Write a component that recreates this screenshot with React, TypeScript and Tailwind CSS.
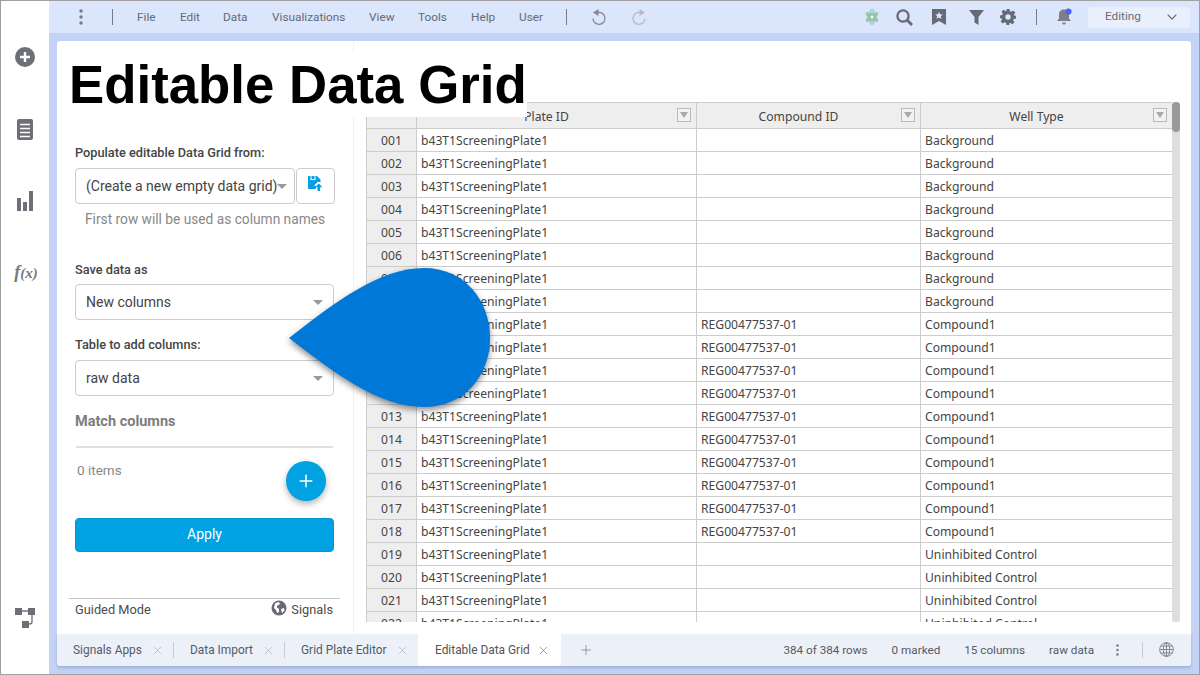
import { ChevronDown, Plus, X } from "lucide-react";
import type { ReactNode } from "react";

const MENU = [
  { label: "File", w: "w-[43px]" },
  { label: "Edit", w: "w-[43px]" },
  { label: "Data", w: "w-[49px]" },
  { label: "Visualizations", w: "w-[97px]" },
  { label: "View", w: "w-[49px]" },
  { label: "Tools", w: "w-[53px]" },
  { label: "Help", w: "w-[48px]" },
  { label: "User", w: "w-[47px]" },
];

const ROWS = Array.from({ length: 22 }, (_, i) => {
  const n = i + 1;
  const compound = n >= 9 && n <= 18;
  return {
    id: String(n).padStart(3, "0"),
    compound: compound ? "REG00477537-01" : "",
    type: n <= 8 ? "Background" : compound ? "Compound1" : "Uninhibited Control",
  };
});

function Dots(props: { className?: string }) {
  return (
    <svg viewBox="0 0 4 16" className={props.className} fill="currentColor">
      <circle cx="2" cy="2" r="1.7" />
      <circle cx="2" cy="8" r="1.7" />
      <circle cx="2" cy="14" r="1.7" />
    </svg>
  );
}

function Sidebar() {
  return (
    <aside className="flex w-[48px] shrink-0 flex-col items-center bg-white text-[#6d6f78]">
      <svg width="20" height="20" viewBox="0 0 20 20" className="mt-[46px]">
        <circle cx="10" cy="10" r="10" fill="currentColor" />
        <path d="M10 5v10M5 10h10" stroke="#fff" strokeWidth="2.4" />
      </svg>
      <svg width="16" height="21" viewBox="0 0 16 21" className="mt-[52px]">
        <rect x="0" y="0" width="16" height="21" rx="2" fill="currentColor" />
        <path d="M3 5.500h10M3 9.500h10M3 13.500h10M3 17.500h10" stroke="#fff" strokeWidth="1.300" />
      </svg>
      <svg width="16" height="20" viewBox="0 0 16 20" className="mt-[51px]" fill="currentColor">
        <rect x="0" y="7" width="4" height="13" />
        <rect x="6" y="11" width="4" height="9" />
        <rect x="12" y="0" width="4" height="20" />
      </svg>
      <div className="mt-[51px] ml-[2px] h-[20px] font-['Liberation_Serif',serif] text-[18px] leading-[20px] font-bold whitespace-nowrap text-[#777a80] italic">
        f<span className="text-[15px]">(x)</span>
      </div>
      <svg width="20" height="20" viewBox="0 0 20 20" className="mt-auto mb-[46px]" fill="currentColor">
        <rect x="0" y="0" width="7" height="7" />
        <rect x="13" y="0" width="7" height="7" />
        <rect x="7" y="13" width="7" height="7" />
        <path d="M7 3h6M17 7v7q0 2-3 2" stroke="currentColor" strokeWidth="1.3" fill="none" />
      </svg>
    </aside>
  );
}

function TopBar() {
  return (
    <header className="flex h-[32px] shrink-0 items-center bg-[#dbe5fb] text-[11.800px] text-[#666a75]">
      <Dots className="ml-[30px] h-[16px] w-[4px] text-[#777a84]" />
      <div className="ml-[29px] h-[16px] w-px bg-[#777a84]" />
      <nav className="ml-[24px] flex pt-px">
        {MENU.map((m) => (
          <span key={m.label} className={m.w}>
            {m.label}
          </span>
        ))}
      </nav>
      <div className="h-[16px] w-px bg-[#777a84]" />
      <svg width="16" height="17" viewBox="0 0 16 17" className="ml-[24px]">
        <path d="M7 3.500A6 6 0 1 1 2 9.500" fill="none" stroke="#868994" strokeWidth="1.300" />
        <path d="M7.500 0v7L2 3.500z" fill="#868994" />
      </svg>
      <svg width="16" height="17" viewBox="0 0 16 17" className="ml-[24px]">
        <path d="M9 3.500A6 6 0 1 0 14 9.500" fill="none" stroke="#b7bac4" strokeWidth="1.300" />
        <path d="M8.500 0v7L14 3.500z" fill="#b7bac4" />
      </svg>
      <div className="ml-auto flex items-center">
        <svg width="16" height="18" viewBox="0 0 16 18">
          <ellipse cx="8" cy="9" rx="3.600" ry="8.500" fill="#a4d4ee" />
          <ellipse cx="8" cy="9" rx="7.500" ry="3" fill="#9cc9ad" transform="rotate(35 8 9)" />
          <ellipse cx="8" cy="9" rx="7.500" ry="3" fill="#9cc9ad" transform="rotate(-35 8 9)" />
          <circle cx="8" cy="9" r="2.400" fill="#eef6f2" stroke="#6ea884" />
        </svg>
        <svg width="17" height="17" viewBox="0 0 17 17" className="ml-[16px]" fill="none" stroke="#666a75" strokeWidth="2.300">
          <circle cx="7" cy="7" r="5.600" />
          <path d="M11 11l5 5" strokeWidth="2.800" />
        </svg>
        <svg width="14" height="16" viewBox="0 0 14 16" className="ml-[19px]" fill="#666a75">
          <path d="M0 0h14v16l-7-4-7 4z" />
          <path d="M7 2.800l1.100 2.500 2.700.2-2 1.800.6 2.700L7 8.600l-2.400 1.400.6-2.700-2-1.800 2.700-.2z" fill="#dbe5fb" />
        </svg>
        <svg width="15" height="15" viewBox="0 0 15 15" className="ml-[23px]" fill="#666a75">
          <path d="M0 0h15L9.500 7v8l-4-2.500V7z" />
        </svg>
        <svg width="16" height="16" viewBox="0 0 16 16" className="ml-[16px]" fill="#666a75">
          <path
            fillRule="evenodd"
            d="M6.500 0h3l.4 2.200 1.400.6 1.900-1.300 2.100 2.100-1.300 1.900.6 1.400L16 6.500v3l-2.200.4-.6 1.400 1.300 1.900-2.100 2.100-1.900-1.300-1.400.6L9.500 16h-3l-.4-2.200-1.400-.6-1.900 1.300-2.100-2.100 1.300-1.900-.6-1.400L0 9.500v-3l2.200-.4.6-1.400-1.300-1.900 2.100-2.100 1.900 1.300 1.400-.6zM8 5.300a2.700 2.700 0 1 0 0 5.400 2.700 2.700 0 0 0 0-5.400z"
          />
        </svg>
        <div className="ml-[20px] h-[16px] w-px bg-[#777a84]" />
        <svg width="16" height="18" viewBox="0 0 16 18" className="ml-[19px]" fill="#7c7f89">
          <path d="M8 1.500c3 0 5 2 5 5v4l2 2.500H1l2-2.500v-4c0-3 2-5 5-5z" />
          <path d="M6 14.500h4l-1 2H7z" />
          <circle cx="12.500" cy="3.500" r="3.100" fill="#4a63f0" />
        </svg>
        <div className="mr-[9px] ml-[16px] flex h-[21px] w-[102px] items-center justify-between rounded-[3px] bg-[#e9effc] pr-[10px] pl-[17px] text-[#6b6e7a]">
          <span>Editing</span>
          <ChevronDown size={16} strokeWidth={1.6} />
        </div>
      </div>
    </header>
  );
}

function Caret() {
  return <span className="h-0 w-0 shrink-0 border-x-[5px] border-t-[5px] border-x-transparent border-t-[#999]" />;
}

function SelectBox(props: { value: string; width: string; pad?: string }) {
  return (
    <div
      className={`flex h-[36px] items-center justify-between rounded-[4px] border border-[#ccc] pl-[10px] text-[14px] text-[#444] ${props.width} ${props.pad ?? "pr-[10px]"}`}
    >
      <span className="whitespace-nowrap">{props.value}</span>
      <Caret />
    </div>
  );
}

function Label(props: { children: ReactNode; className?: string }) {
  return <div className={`text-[12.750px] leading-[16px] font-medium text-[#444] ${props.className ?? ""}`}>{props.children}</div>;
}

function LeftPanel() {
  return (
    <section className="relative flex w-[297px] shrink-0 flex-col border-r border-[#f1f2fa] pt-[104px] pl-[18px]">
      <Label>Populate editable Data Grid from:</Label>
      <div className="mt-[7px] flex">
        <SelectBox value="(Create a new empty data grid)" width="w-[220px]" pad="pr-[11px]" />
        <div className="ml-px flex h-[36px] w-[39px] items-center justify-center rounded-[4px] border border-[#ccc]">
          <svg width="15" height="15" viewBox="0 0 15 15" className="mb-[5px]">
            <path d="M0 0h2.500v4h5V0H9l3.500 3.500V6H9.500L6 10h2v3H0z" fill="#0a9ee0" />
            <path d="M3.500 0h3v3h-3z" fill="#0a9ee0" />
            <path d="M10.800 7.500l3.700 3.700h-2.400V15h-2.600v-3.800H7.100z" fill="#0a9ee0" />
          </svg>
        </div>
      </div>
      <div className="mt-[6px] ml-[10px] text-[13.720px] leading-[18px] whitespace-nowrap text-[#888]">First row will be used as column names</div>
      <Label className="mt-[34px]">Save data as</Label>
      <SelectBox value="New columns" width="w-[259px] mt-[6px]" />
      <Label className="mt-[17px]">Table to add columns:</Label>
      <SelectBox value="raw data" width="w-[259px] mt-[7px]" />
      <div className="mt-[17px] text-[14.500px] leading-[18px] font-bold text-[#7d7d7d]">Match columns</div>
      <div className="mt-[15px] ml-px h-[2px] w-[257px] bg-[#e0e0e0]" />
      <div className="mt-[13px] ml-[2px] text-[13.500px] leading-[18px] text-[#888]">0 items</div>
      <button className="absolute top-[420px] left-[229px] flex h-[40px] w-[40px] items-center justify-center rounded-full bg-[#00a2e2] text-white shadow-[0_3px_6px_rgba(0,0,0,0.3)]">
        <Plus size={20} strokeWidth={1.8} />
      </button>
      <button className="mt-[39px] h-[34px] w-[259px] rounded-[4px] border border-[#0a94cf] bg-[#00a2e2] pb-[2px] text-[14px] text-white">
        Apply
      </button>
      <div className="mt-[46px] -ml-[6px] flex w-[271px] items-center justify-between border-t border-[#c4c4c4] pt-[2px] pr-[7px] pl-[6px] text-[12.800px] leading-[18px] text-[#4c4c4c]">
        <span>Guided Mode</span>
        <span className="flex items-center gap-[4px]">
          <svg width="16" height="16" viewBox="0 0 16 16" className="-mt-[4px]">
            <circle cx="8" cy="8" r="7.500" fill="#666a75" />
            <path d="M4 3.500l3-1.500 2 1-1 2-2 .5v2l2 1.500v3l-2 1-1-3-2-2zM10 9l3-1 .5 2.500-2.500 2.500z" fill="#fff" />
          </svg>
          Signals
        </span>
      </div>
    </section>
  );
}

function FilterButton() {
  return (
    <span className="absolute top-[5px] right-[5px] flex h-[14px] w-[14px] items-center justify-center border border-[#bbb] bg-[#f2f2f2]">
      <span className="h-0 w-0 border-x-[4px] border-t-[6px] border-x-transparent border-t-[#aaa]" />
    </span>
  );
}

function GridPanel() {
  const cell = "flex shrink-0 items-center border-r border-[#ccc] pt-[2px] pl-[4px]";
  const head = "relative flex shrink-0 items-center justify-center border-r border-[#ccc] pt-[3px] pr-[20px]";
  return (
    <section className="flex min-w-0 flex-1 pt-[61px] pr-[11px] pl-[12px]">
      <div className="h-[520px] w-[806px] overflow-hidden border-t border-l border-[#ccc] font-['Noto_Sans',sans-serif] text-[12.150px] text-[#444]">
        <div className="flex h-[26px] border-b border-[#ccc] bg-[#eee]">
          <div className="w-[50px] shrink-0 border-r border-[#ccc]" />
          <div className={`${head} w-[280px]`}>
            Plate ID
            <FilterButton />
          </div>
          <div className={`${head} w-[224px]`}>
            Compound ID
            <FilterButton />
          </div>
          <div className={`${head} w-[252px]`}>
            Well Type
            <FilterButton />
          </div>
        </div>
        {ROWS.map((r) => (
          <div key={r.id} className="flex h-[23px] border-b border-[#ccc]">
            <div className="flex w-[50px] shrink-0 items-center justify-center border-r border-[#ccc] bg-[#eee] pt-[2px]">{r.id}</div>
            <div className={`${cell} w-[280px]`}>b43T1ScreeningPlate1</div>
            <div className={`${cell} w-[224px]`}>{r.compound}</div>
            <div className={`${cell} w-[252px]`}>{r.type}</div>
          </div>
        ))}
      </div>
      <div className="h-[520px] w-[8px] rounded-[2px] bg-[#dedede]">
        <div className="h-[30px] rounded-[4px] bg-[#9a9a9a]" />
      </div>
    </section>
  );
}

function Tab(props: { label: string; active?: boolean; width: string }) {
  return (
    <div
      className={`flex h-full shrink-0 items-center justify-between whitespace-nowrap ${props.width} ${
        props.active ? "rounded-b-[3px] bg-white pr-[11px] pl-[17px] text-[#555]" : "pr-[9px] pl-[16px]"
      }`}
    >
      <span className="pt-[2px]">{props.label}</span>
      <X size={13} strokeWidth={1} className={props.active ? "text-[#555]" : "text-[#a0a3ac]"} />
    </div>
  );
}

function TabBar() {
  return (
    <footer className="flex h-[32px] shrink-0 items-center rounded-b-[3px] bg-[#ecf0f9] text-[11.900px] whitespace-nowrap text-[#555a66] shadow-[0_2px_3px_rgba(90,110,170,0.35)]">
      <Tab label="Signals Apps" width="w-[116px]" />
      <div className="h-[16px] w-px bg-[#c8cad2]" />
      <Tab label="Data Import" width="w-[110px]" />
      <div className="h-[16px] w-px bg-[#c8cad2]" />
      <Tab label="Grid Plate Editor" width="w-[133px]" />
      <Tab label="Editable Data Grid" width="w-[143px]" active />
      <Plus size={16} strokeWidth={1} className="ml-[17px] text-[#777]" />
      <div className="ml-auto flex items-center">
        <div className="flex pt-[2px] text-[11.700px]">
          <span>384 of 384 rows</span>
          <span className="ml-[24px]">0 marked</span>
          <span className="ml-[24px]">15 columns</span>
          <span className="ml-[24px]">raw data</span>
        </div>
        <Dots className="ml-[22px] h-[12px] w-[3px] text-[#777a84]" />
        <div className="ml-[23px] h-[16px] w-px bg-[#c8cad2]" />
        <svg width="15" height="15" viewBox="0 0 16 16" className="mr-[17px] ml-[16px]" fill="none" stroke="#777a84" strokeWidth="0.9">
          <circle cx="8" cy="8" r="7.300" />
          <ellipse cx="8" cy="8" rx="3.400" ry="7.300" />
          <path d="M8 .7v14.600M.7 8h14.600M1.700 4.300h12.600M1.700 11.700h12.600" />
        </svg>
      </div>
    </footer>
  );
}

export default function App() {
  return (
    <div className="relative flex h-[675px] w-[1200px] overflow-hidden border border-[#a0a0a0] bg-white font-['Roboto',sans-serif]">
      <Sidebar />
      <div className="flex min-w-0 flex-1 flex-col bg-[#c3d3f5]">
        <TopBar />
        <main className="mx-[8px] mt-[8px] mb-[8px] flex min-h-0 flex-1 flex-col rounded-[3px] bg-white">
          <div className="flex min-h-0 flex-1">
            <LeftPanel />
            <GridPanel />
          </div>
          <TabBar />
        </main>
      </div>

      <h1 className="absolute top-[52px] left-[60px] h-[64px] w-[466px] bg-white pl-[8px] font-['Liberation_Sans',sans-serif] text-[52.800px] leading-[64px] font-bold whitespace-nowrap text-black">
        Editable Data Grid
      </h1>
      <svg
        width="202"
        height="140"
        viewBox="0 0 202 140"
        className="absolute top-[267px] left-[288px] drop-shadow-[0_3px_3px_rgba(0,0,0,0.45)]"
      >
        <path d="M0 70C45 35 90 0 135 0C175 0 201 32 201 70C201 108 175 139 135 139C90 139 45 105 0 70Z" fill="#0078d7" />
      </svg>
    </div>
  );
}
